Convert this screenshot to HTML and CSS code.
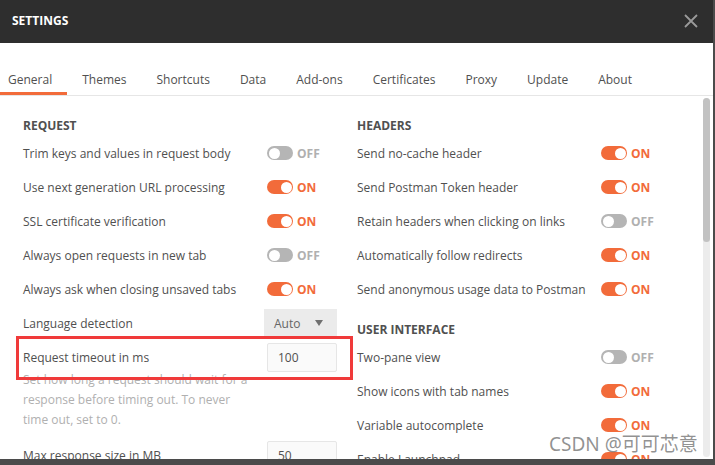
FILE: index.html
```html
<!DOCTYPE html>
<html>
<head>
<meta charset="utf-8">
<link rel="stylesheet" href="styles.css">
</head>
<body>
<div class="backdrop">
  <div class="modal">
    <header class="titlebar">
      <span class="title">SETTINGS</span>
      <svg class="close" width="14" height="14" viewBox="0 0 14 14"><path d="M1 1 L13 13 M13 1 L1 13" stroke="#9a9a9a" stroke-width="1.8" fill="none"/></svg>
    </header>
    <nav class="tabs">
      <span class="tab active">General</span>
      <span class="tab">Themes</span>
      <span class="tab">Shortcuts</span>
      <span class="tab">Data</span>
      <span class="tab">Add-ons</span>
      <span class="tab">Certificates</span>
      <span class="tab">Proxy</span>
      <span class="tab">Update</span>
      <span class="tab">About</span>
    </nav>
    <div class="body">
      <div class="content">
        <section class="col">
          <h3 class="heading">REQUEST</h3>
          <div class="row"><span class="label">Trim keys and values in request body</span><span class="ctl"><span class="toggle off"><span class="knob"></span></span><span class="state off">OFF</span></span></div>
          <div class="row"><span class="label">Use next generation URL processing</span><span class="ctl"><span class="toggle on"><span class="knob"></span></span><span class="state on">ON</span></span></div>
          <div class="row"><span class="label">SSL certificate verification</span><span class="ctl"><span class="toggle on"><span class="knob"></span></span><span class="state on">ON</span></span></div>
          <div class="row"><span class="label">Always open requests in new tab</span><span class="ctl"><span class="toggle off"><span class="knob"></span></span><span class="state off">OFF</span></span></div>
          <div class="row"><span class="label">Always ask when closing unsaved tabs</span><span class="ctl"><span class="toggle on"><span class="knob"></span></span><span class="state on">ON</span></span></div>
          <div class="row"><span class="label">Language detection</span><span class="select">Auto<span class="caret"></span></span></div>
          <div class="row"><span class="label">Request timeout in ms</span><span class="input">100</span></div>
          <p class="help">Set how long a request should wait for a response before timing out. To never time out, set to 0.</p>
          <div class="row"><span class="label">Max response size in MB</span><span class="input">50</span></div>
        </section>
        <section class="col">
          <h3 class="heading">HEADERS</h3>
          <div class="row"><span class="label">Send no-cache header</span><span class="ctl"><span class="toggle on"><span class="knob"></span></span><span class="state on">ON</span></span></div>
          <div class="row"><span class="label">Send Postman Token header</span><span class="ctl"><span class="toggle on"><span class="knob"></span></span><span class="state on">ON</span></span></div>
          <div class="row"><span class="label">Retain headers when clicking on links</span><span class="ctl"><span class="toggle off"><span class="knob"></span></span><span class="state off">OFF</span></span></div>
          <div class="row"><span class="label">Automatically follow redirects</span><span class="ctl"><span class="toggle on"><span class="knob"></span></span><span class="state on">ON</span></span></div>
          <div class="row"><span class="label">Send anonymous usage data to Postman</span><span class="ctl"><span class="toggle on"><span class="knob"></span></span><span class="state on">ON</span></span></div>
          <h3 class="heading second">USER INTERFACE</h3>
          <div class="row"><span class="label">Two-pane view</span><span class="ctl"><span class="toggle off"><span class="knob"></span></span><span class="state off">OFF</span></span></div>
          <div class="row"><span class="label">Show icons with tab names</span><span class="ctl"><span class="toggle on"><span class="knob"></span></span><span class="state on">ON</span></span></div>
          <div class="row"><span class="label">Variable autocomplete</span><span class="ctl"><span class="toggle on"><span class="knob"></span></span><span class="state on">ON</span></span></div>
          <div class="row"><span class="label">Enable Launchpad</span><span class="ctl"><span class="toggle on"><span class="knob"></span></span><span class="state on">ON</span></span></div>
        </section>
      </div>
      <div class="scrollbar"><div class="thumb"></div></div>
    </div>
    <div class="annotation"></div>
    <div class="watermark">CSDN @可可芯意</div>
  </div>
</div>
</body>
</html>
```
FILE: styles.css
```css
* { box-sizing: border-box; }
html, body { margin: 0; padding: 0; }
body {
  width: 715px;
  height: 465px;
  overflow: hidden;
  font-family: "Open Sans", "Noto Sans", sans-serif;
  color: #505050;
}
.backdrop {
  width: 715px;
  height: 465px;
  background: #4b4b4b;
}
.modal {
  position: relative;
  width: 713px;
  height: 459px;
  background: #fff;
  overflow: hidden;
  display: flex;
  flex-direction: column;
}
.titlebar {
  height: 43px;
  flex: none;
  background: #2e2e2e;
  display: flex;
  align-items: center;
  justify-content: space-between;
  padding: 0 15px 2px 12px;
}
.title {
  color: #fff;
  font-weight: 700;
  font-size: 12px;
}
.close { display: block; }
.tabs {
  flex: none;
  height: 53px;
  display: flex;
  align-items: flex-end;
  border-bottom: 1px solid #e6e6e6;
}
.tab {
  font-size: 12px;
  color: #505050;
  padding: 0 15px 4px 15px;
  height: 23px;
  line-height: 16px;
  border-bottom: 3px solid transparent;
}
.tab:first-child { padding-left: 8px; }
.tab.active { border-bottom-color: #f26b3a; }
.body {
  flex: 1;
  display: flex;
  min-height: 0;
}
.content {
  flex: 1;
  display: flex;
  padding-left: 23px;
}
.col { width: 334px; }
.heading {
  margin: 20px 0 0;
  height: 20px;
  line-height: 20px;
  font-size: 12px;
  font-weight: 700;
  color: #505050;
}
.heading.second { margin-top: 14px; }
.row {
  display: flex;
  align-items: center;
  height: 34px;
  font-size: 12px;
  white-space: nowrap;
}
.label { width: 244px; flex: none; }
.ctl { display: flex; align-items: center; gap: 4px; }
.toggle {
  position: relative;
  width: 26px;
  height: 14px;
  border-radius: 7px;
  display: inline-block;
}
.toggle.on { background: #f26b3a; }
.toggle.off { background: #b5b5b5; }
.knob {
  position: absolute;
  top: 1.5px;
  width: 11px;
  height: 11px;
  border-radius: 50%;
  background: #fff;
}
.toggle.on .knob { right: 1.5px; }
.toggle.off .knob { left: 1.5px; }
.state { font-weight: 700; font-size: 12px; }
.state.on { color: #f26b3a; }
.state.off { color: #b0b0b0; }
.select {
  margin-left: -3px;
  width: 73px;
  height: 29px;
  background: #ebebeb;
  display: flex;
  align-items: center;
  padding-left: 10px;
  color: #666;
}
.caret {
  margin-left: 15px;
  width: 0; height: 0;
  border-left: 4.5px solid transparent;
  border-right: 4.5px solid transparent;
  border-top: 6px solid #707070;
}
.input {
  width: 70px;
  height: 29px;
  border: 1px solid #e6e6e6;
  border-radius: 2px;
  background: #fafafa;
  display: flex;
  align-items: center;
  padding-left: 10px;
  color: #505050;
}
.help {
  width: 244px;
  margin: -4px 0 8px;
  padding-right: 18px;
  font-size: 12px;
  line-height: 20px;
  color: #b0b0b0;
}
.scrollbar {
  flex: none;
  width: 7px;
  margin: 2px 3px 2px 0;
  background: #ececec;
  border-radius: 4px;
}
.thumb {
  height: 144px;
  background: #c2c2c2;
  border-radius: 4px;
}
.annotation {
  position: absolute;
  left: 16px;
  top: 336px;
  width: 337px;
  height: 44px;
  border: 3px solid #f03a3a;
}
.watermark {
  position: absolute;
  left: 549px;
  top: 431px;
  font-family: "Noto Sans", "Noto Sans CJK SC", sans-serif;
  font-size: 19px;
  line-height: 26px;
  color: rgba(110, 110, 110, 0.75);
  white-space: nowrap;
}
```
